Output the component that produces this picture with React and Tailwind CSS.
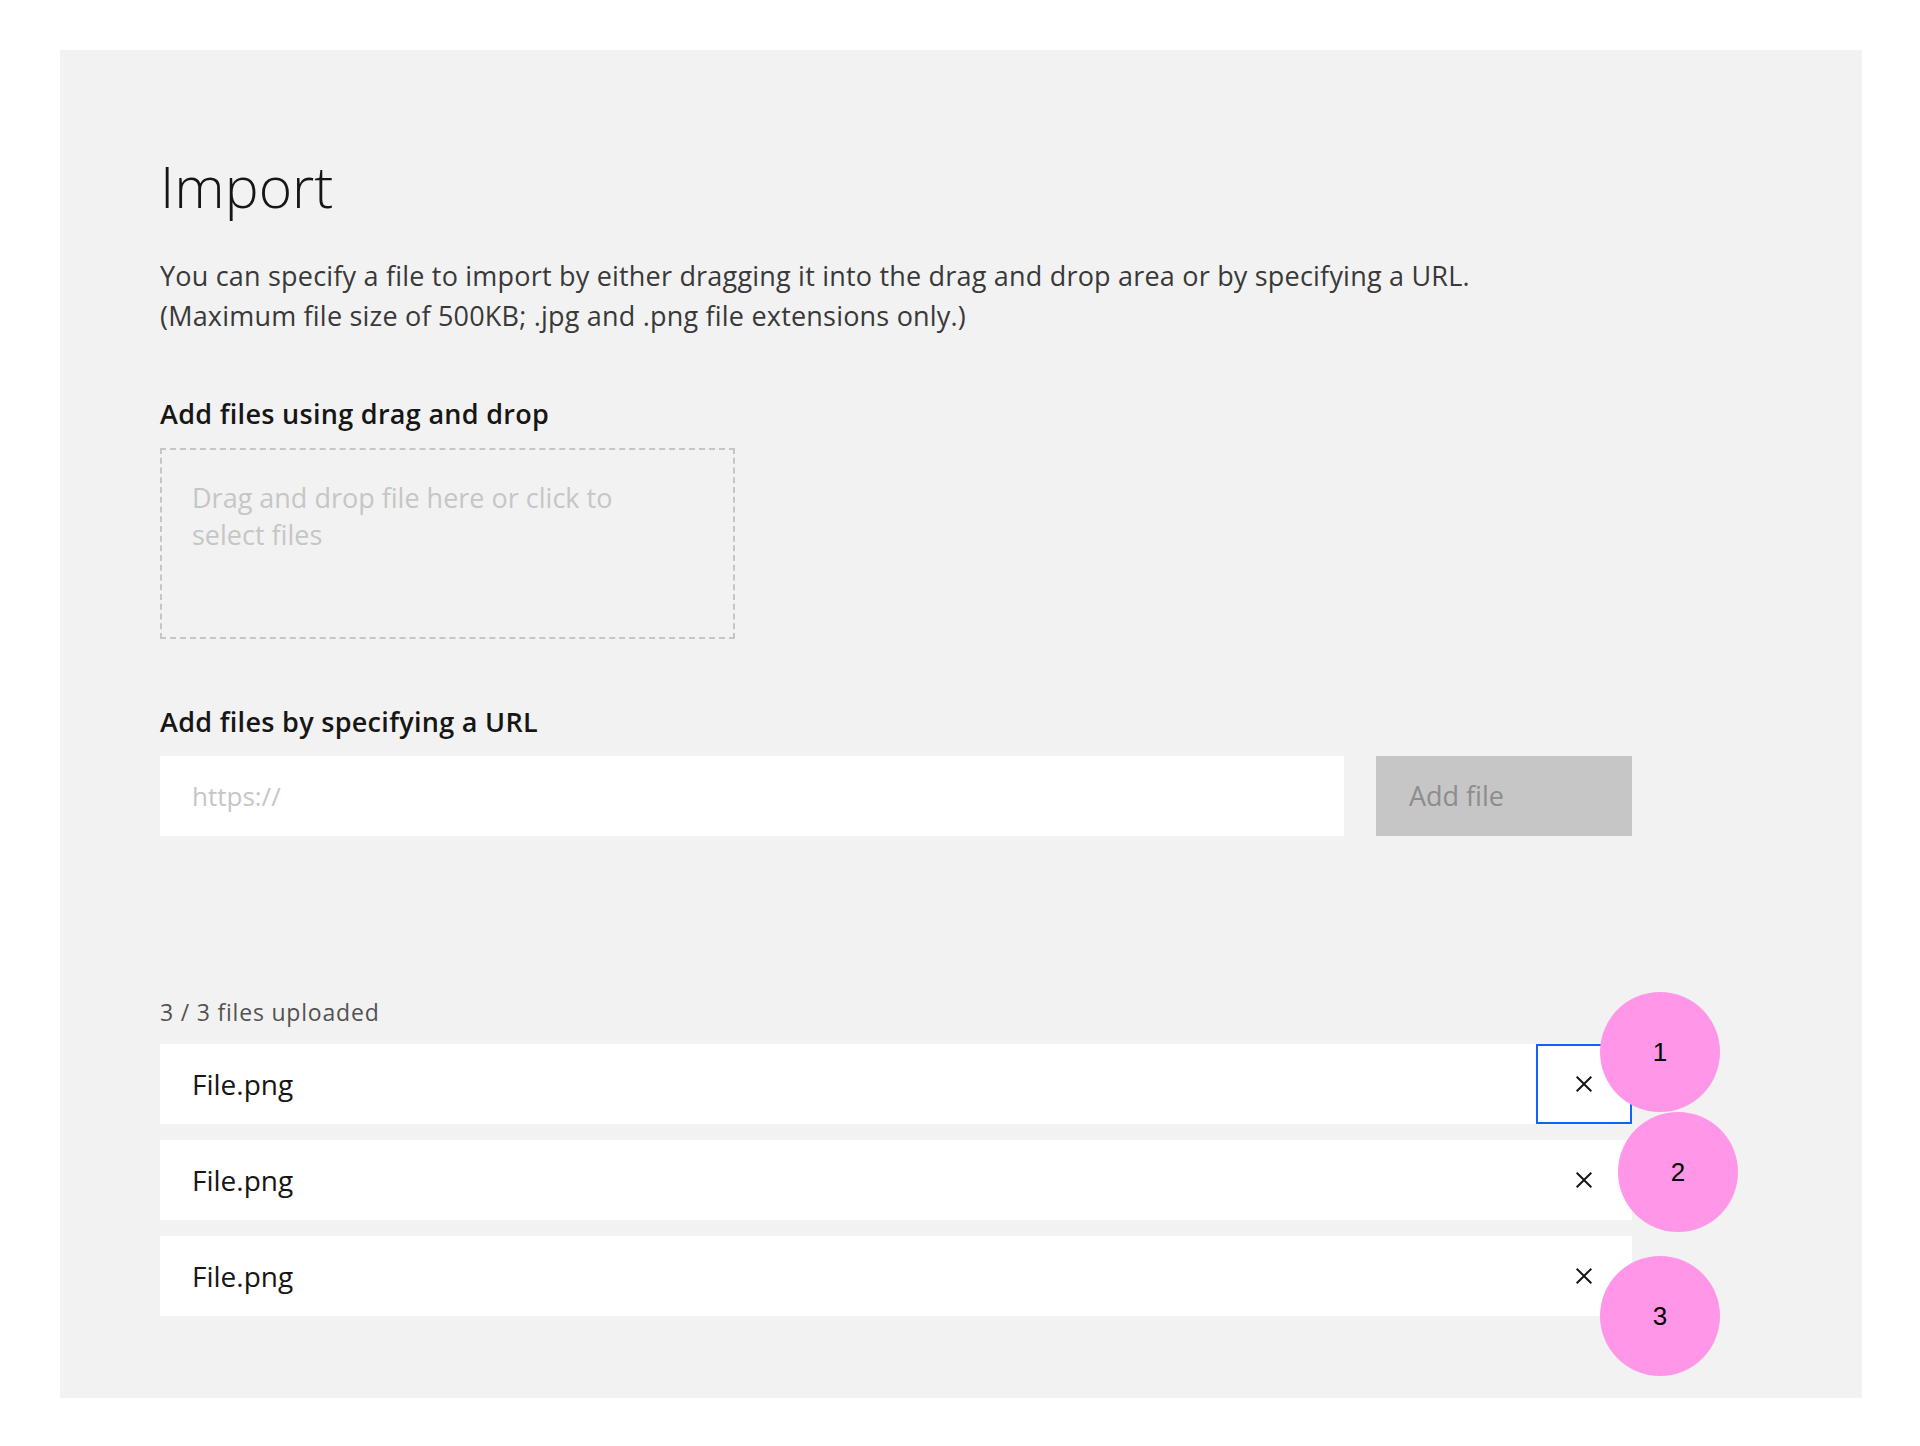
import React from "react";

const files = [
  { id: 1, name: "File.png", focused: true },
  { id: 2, name: "File.png", focused: false },
  { id: 3, name: "File.png", focused: false },
];

function CloseIcon() {
  return (
    <svg width="32" height="32" viewBox="0 0 32 32" fill="#161616">
      <path d="M24 9.4L22.6 8 16 14.6 9.4 8 8 9.4 14.6 16 8 22.6 9.4 24 16 17.4 22.6 24 24 22.6 17.4 16 24 9.4z" />
    </svg>
  );
}

function Marker({ n, className }) {
  return (
    <div
      className={`absolute w-[120px] h-[120px] rounded-full bg-[#ff96e8] flex items-center justify-center text-[26px] text-black ${className}`}
      style={{ fontFamily: '"Liberation Sans", Arial, sans-serif' }}
    >
      {n}
    </div>
  );
}

function App() {
  return (
    <div
      className="min-h-[1446px] bg-white pt-[50px] pl-[60px]"
      style={{ fontFamily: '"Open Sans", "Noto Sans", sans-serif' }}
    >
      <div className="relative w-[1802px] h-[1348px] bg-[#f2f2f2] pl-[100px] pt-[104px]">
        <h1 className="text-[57px] leading-[64px] font-light text-[#161616]">
          Import
        </h1>
        <p className="mt-[38px] text-[27px] leading-[40px] tracking-[0.2px] text-[#393939]">
          <span className="block">
            You can specify a file to import by either dragging it into the
            drag and drop area or by specifying a URL.
          </span>
          <span className="block">
            (Maximum file size of 500KB; .jpg and .png file extensions only.)
          </span>
        </p>

        <h2 className="mt-[62px] text-[27px] leading-[32px] tracking-[0.3px] font-semibold text-[#161616]">
          Add files using drag and drop
        </h2>
        <div className="mt-[18px] w-[575px] h-[191px] border-2 border-dashed border-[#c6c6c6] pl-[30px] pt-[29px]">
          <p className="max-w-[470px] text-[27px] leading-[37px] text-[#c6c6c6]">
            Drag and drop file here or click to select files
          </p>
        </div>

        <h2 className="mt-[67px] text-[27px] leading-[32px] tracking-[0.3px] font-semibold text-[#161616]">
          Add files by specifying a URL
        </h2>
        <div className="mt-[18px] flex">
          <div className="w-[1184px] h-[80px] bg-white flex items-center pl-[32px] text-[26px] text-[#c6c6c6]">
            https://
          </div>
          <button className="ml-[32px] w-[256px] h-[80px] bg-[#c6c6c6] text-left pl-[33px] text-[27px] text-[#8d8d8d]">
            Add file
          </button>
        </div>

        <p className="mt-[160px] text-[23px] leading-[32px] tracking-[0.8px] text-[#525252]">
          3 / 3 files uploaded
        </p>
        <div className="mt-[16px] flex flex-col gap-4">
          {files.map((f) => (
            <div
              key={f.id}
              className="w-[1472px] h-[80px] bg-white flex items-center justify-between pl-[32px]"
            >
              <span className="text-[28px] text-[#161616]">{f.name}</span>
              <button
                className={`w-[96px] h-[80px] flex items-center justify-center ${
                  f.focused ? "border-2 border-[#0f62fe]" : ""
                }`}
              >
                <CloseIcon />
              </button>
            </div>
          ))}
        </div>

        <Marker n="1" className="left-[1540px] top-[942px]" />
        <Marker n="2" className="left-[1558px] top-[1062px]" />
        <Marker n="3" className="left-[1540px] top-[1206px]" />
      </div>
    </div>
  );
}

export default App;
